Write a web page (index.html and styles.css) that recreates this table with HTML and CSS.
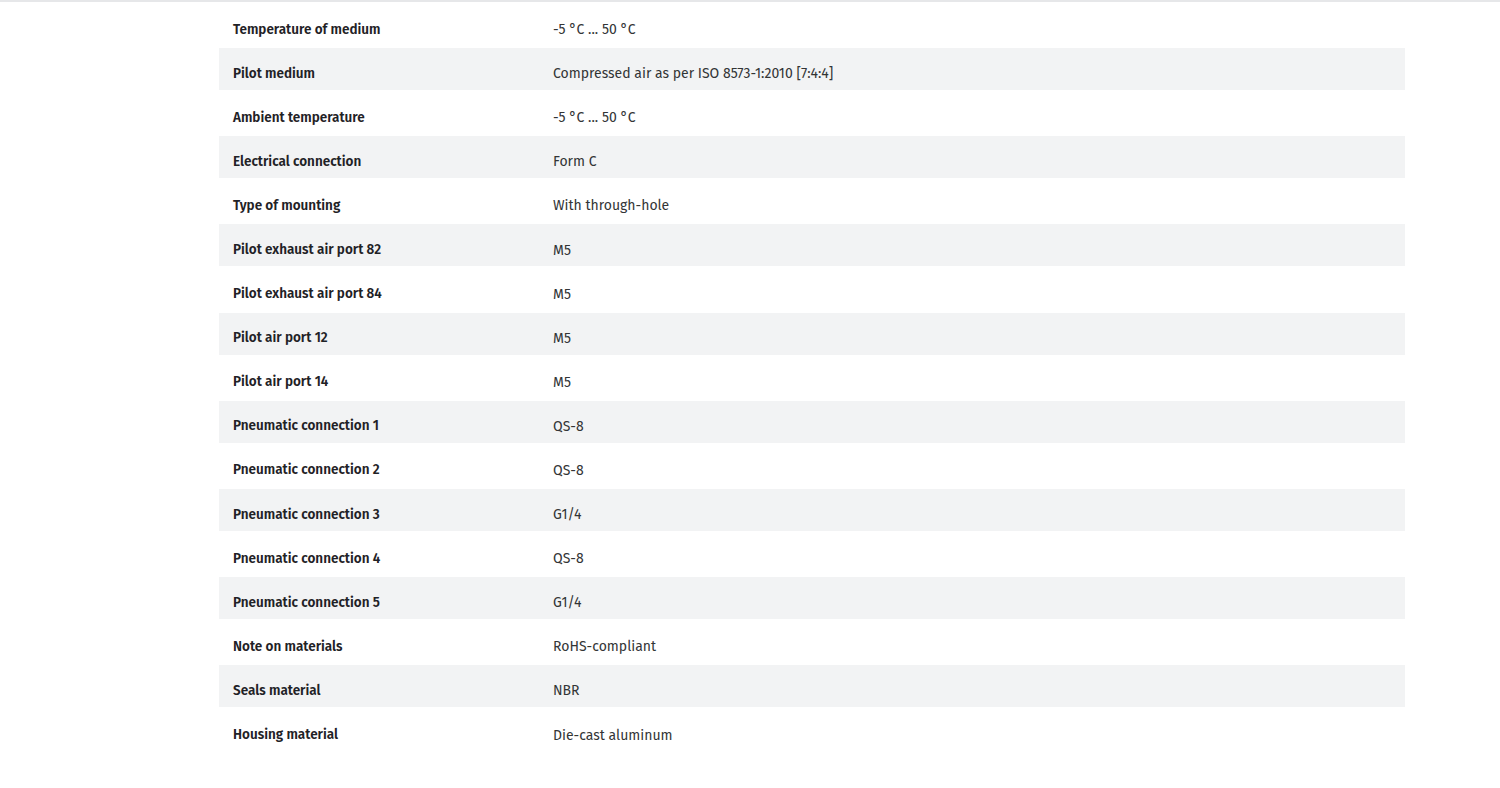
FILE: index.html
```html
<!DOCTYPE html>
<html lang="en">
<head>
<meta charset="utf-8">
<title>Technical data</title>
<link rel="stylesheet" href="styles.css">
</head>
<body>
<div class="topline"></div>
<main class="wrap">
  <div class="specs">
    <div class="row"><div class="label">Temperature of medium</div><div class="value">-5 °C ... 50 °C</div></div>
    <div class="row alt"><div class="label">Pilot medium</div><div class="value">Compressed air as per ISO 8573-1:2010 [7:4:4]</div></div>
    <div class="row"><div class="label">Ambient temperature</div><div class="value">-5 °C ... 50 °C</div></div>
    <div class="row alt"><div class="label">Electrical connection</div><div class="value">Form C</div></div>
    <div class="row"><div class="label">Type of mounting</div><div class="value">With through-hole</div></div>
    <div class="row alt"><div class="label">Pilot exhaust air port 82</div><div class="value">M5</div></div>
    <div class="row"><div class="label">Pilot exhaust air port 84</div><div class="value">M5</div></div>
    <div class="row alt"><div class="label">Pilot air port 12</div><div class="value">M5</div></div>
    <div class="row"><div class="label">Pilot air port 14</div><div class="value">M5</div></div>
    <div class="row alt"><div class="label">Pneumatic connection 1</div><div class="value">QS-8</div></div>
    <div class="row"><div class="label">Pneumatic connection 2</div><div class="value">QS-8</div></div>
    <div class="row alt"><div class="label">Pneumatic connection 3</div><div class="value">G1/4</div></div>
    <div class="row"><div class="label">Pneumatic connection 4</div><div class="value">QS-8</div></div>
    <div class="row alt"><div class="label">Pneumatic connection 5</div><div class="value">G1/4</div></div>
    <div class="row"><div class="label">Note on materials</div><div class="value">RoHS-compliant</div></div>
    <div class="row alt"><div class="label">Seals material</div><div class="value">NBR</div></div>
    <div class="row"><div class="label">Housing material</div><div class="value">Die-cast aluminum</div></div>
  </div>
</main>
</body>
</html>
```
FILE: styles.css
```css
html, body {
  margin: 0;
  padding: 0;
  background: #ffffff;
}
body {
  font-family: "Fira Sans", Roboto, "Liberation Sans", sans-serif;
  color: #1d2125;
  font-size: 13.5px;
}
.topline {
  height: 2px;
  background: #e6e7e9;
}
.wrap {
  padding: 2px 95px 0 219px;
}
.specs {
  display: flex;
  flex-direction: column;
}
.row {
  display: flex;
  align-items: center;
  height: 44.1px;
  box-sizing: border-box;
  padding-top: 6px;
}
.row.alt {
  background: linear-gradient(#f2f3f4, #f2f3f4) top / 100% 42px no-repeat;
}
.label {
  flex: 0 0 334px;
  box-sizing: border-box;
  padding-left: 14px;
  font-weight: 600;
  color: #1f2226;
}
.value {
  flex: 1 1 auto;
  font-size: 14px;
  font-weight: 400;
  color: #333536;
  padding-top: 1px;
}
```
